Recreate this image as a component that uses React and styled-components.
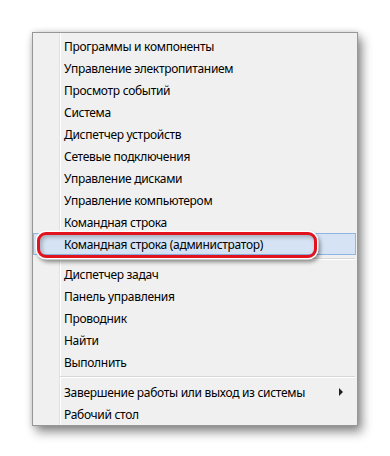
import React from "react";
import styled, { createGlobalStyle } from "styled-components";

const Global = createGlobalStyle`
  html, body { margin: 0; padding: 0; background: #ffffff; }
  body { font-family: "Noto Sans", "Liberation Sans", sans-serif; }
`;

const Page = styled.div`
  width: 390px;
  height: 456px;
  padding: 32px 0 0 32px;
  box-sizing: border-box;
  background: #ffffff;
`;

const Menu = styled.div`
  width: 326px;
  box-sizing: border-box;
  border: 1px solid #979797;
  padding: 2px 1px 0 0;
  background:
    linear-gradient(
      to right,
      transparent 26px,
      #e2e2e2 26px,
      #e2e2e2 27px,
      #ffffff 27px,
      #ffffff 28px,
      transparent 28px
    ),
    #f0f0f0;
  box-shadow: 4px 6px 10px rgba(0, 0, 0, 0.45), 0 0 6px rgba(0, 0, 0, 0.15);
  display: flex;
  flex-direction: column;
`;

const Row = styled.div`
  position: relative;
  height: 22px;
  box-sizing: border-box;
  display: flex;
  align-items: center;
  justify-content: space-between;
  padding: 0 12px 0 30px;
  font-size: 12px;
  letter-spacing: -0.3px;
  color: #000;
  white-space: nowrap;
  background: ${(p) => (p.$active ? "#d5e3f4" : "transparent")};
  border: 1px solid ${(p) => (p.$active ? "#8fb5e6" : "transparent")};
`;

const Separator = styled.div`
  height: 1px;
  margin: 3px 1px 3px 27px;
  background: #d7d7d7;
  border-bottom: 1px solid #ffffff;
`;

const Arrow = styled.span`
  width: 0;
  height: 0;
  border-top: 4px solid transparent;
  border-bottom: 4px solid transparent;
  border-left: 4px solid #202020;
`;

const Callout = styled.div`
  position: absolute;
  left: 3px;
  top: -2px;
  width: 280px;
  height: 26px;
  box-sizing: border-box;
  border: 3px solid #e1131f;
  border-radius: 9px;
  box-shadow: 0 0 0 1.5px #ffffff, 2px 3px 4px 1px rgba(0, 0, 0, 0.45),
    inset 2px 2px 4px rgba(0, 0, 0, 0.25);
  pointer-events: none;
`;

const group1 = [
  "Программы и компоненты",
  "Управление электропитанием",
  "Просмотр событий",
  "Система",
  "Диспетчер устройств",
  "Сетевые подключения",
  "Управление дисками",
  "Управление компьютером",
  "Командная строка",
];

const group2 = [
  "Диспетчер задач",
  "Панель управления",
  "Проводник",
  "Найти",
  "Выполнить",
];

export default function App() {
  return (
    <>
      <Global />
      <Page>
        <Menu>
          {group1.map((t) => (
            <Row key={t}>{t}</Row>
          ))}
          <Row $active>
            Командная строка (администратор)
            <Callout />
          </Row>
          <Separator />
          {group2.map((t) => (
            <Row key={t}>{t}</Row>
          ))}
          <Separator />
          <Row>
            Завершение работы или выход из системы
            <Arrow />
          </Row>
          <Row>Рабочий стол</Row>
        </Menu>
      </Page>
    </>
  );
}
